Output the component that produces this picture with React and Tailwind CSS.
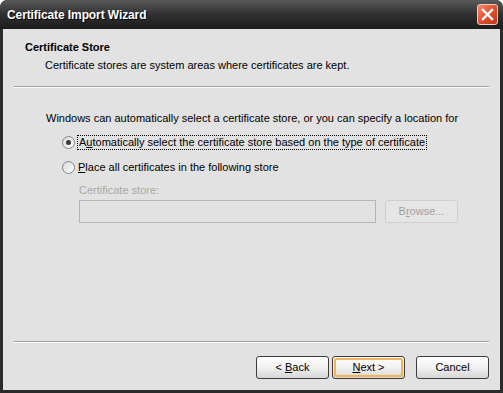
import React from 'react';

const ui = { fontFamily: '"Liberation Sans", Arial, sans-serif' };

function Radio({ checked }) {
  return (
    <span className="relative inline-block w-[13px] h-[13px] rounded-full border border-[#7f8690] bg-gradient-to-br from-[#d8d8d8] to-[#ffffff] shrink-0">
      {checked ? (
        <span className="absolute left-[3px] top-[3px] w-[5px] h-[5px] rounded-full bg-[#3c3c3c]" />
      ) : null}
    </span>
  );
}

function XpButton({ children, isDefault, disabled }) {
  return (
    <button
      type="button"
      className={
        'h-[23px] w-[73px] rounded-[3px] border text-[11px] leading-none flex items-center justify-center ' +
        (disabled
          ? 'border-[#cfcfcf] bg-[#e6e6e6] text-[#a1a198]'
          : 'border-[#3d3d3d] bg-gradient-to-b from-[#ffffff] via-[#f1f1f1] to-[#d6d6d6] text-black')
      }
      style={ui}
    >
      {isDefault ? (
        <span className="w-[69px] h-[19px] rounded-[2px] border-2 border-[#f3b35a] flex items-center justify-center">
          {children}
        </span>
      ) : (
        children
      )}
    </button>
  );
}

export default function App() {
  return (
    <div className="w-[503px] h-[393px] bg-[#2b2b2b] rounded-t-[7px] flex flex-col overflow-hidden" style={ui}>
      <div className="h-[29px] shrink-0 flex items-center justify-between pl-[7px] pr-[5px] bg-gradient-to-b from-[#5a5a5a] via-[#303030] to-[#1c1c1c] rounded-t-[7px]">
        <span className="text-white font-bold text-[12px] tracking-[-0.1px]" style={{ textShadow: '1px 1px 0 #000' }}>
          Certificate Import Wizard
        </span>
        <span className="w-[21px] h-[21px] rounded-[3px] border border-[#e8d0c8] bg-gradient-to-br from-[#f08a6a] via-[#e0502a] to-[#c0391a] flex items-center justify-center">
          <svg width="13" height="13" viewBox="0 0 13 13">
            <path d="M2 2 L11 11 M11 2 L2 11" stroke="#ffffff" strokeWidth="2.4" strokeLinecap="square" />
          </svg>
        </span>
      </div>

      <div className="flex-1 mx-[3px] mb-[3px] bg-[#e2e2e2] flex flex-col text-[11px] leading-[13px] text-black">
        <div className="h-[57px] shrink-0 pt-[12px]">
          <div className="pl-[22px] font-bold">Certificate Store</div>
          <div className="pl-[42px] mt-[5px]">Certificate stores are system areas where certificates are kept.</div>
        </div>
        <div className="mx-[11px] border-t border-[#a0a0a0] border-b border-b-white" />

        <div className="pl-[43px] pt-[24px]">
          <div>Windows can automatically select a certificate store, or you can specify a location for</div>
          <div className="pl-[16px] mt-[9px] flex items-center h-[16px] gap-[2px]">
            <Radio checked />
            <span className="border border-dotted border-black px-[1px]">
              A<span className="underline">u</span>tomatically select the certificate store based on the type of certificate
            </span>
          </div>
          <div className="pl-[16px] mt-[9px] flex items-center h-[16px] gap-[3px]">
            <Radio />
            <span>
              <span className="underline">P</span>lace all certificates in the following store
            </span>
          </div>
          <div className="pl-[33px] mt-[9px] text-[#a8a8a0]">Certificate store:</div>
          <div className="pl-[33px] mt-[3px] flex gap-[9px]">
            <div className="w-[297px] h-[23px] border border-[#b5b5b5] bg-[#e2e2e2]" />
            <XpButton disabled>
              B<span className="underline">r</span>owse...
            </XpButton>
          </div>
        </div>

        <div className="flex-1" />
        <div className="mx-[11px] border-t border-[#a0a0a0] border-b border-b-white" />
        <div className="flex justify-end pr-[11px] pt-[13px] pb-[11px]">
          <XpButton>
            &lt; <span className="underline ml-[3px]">B</span>ack
          </XpButton>
          <div className="w-[3px]" />
          <XpButton isDefault>
            <span className="underline">N</span>ext &gt;
          </XpButton>
          <div className="w-[11px]" />
          <XpButton>Cancel</XpButton>
        </div>
      </div>
    </div>
  );
}
